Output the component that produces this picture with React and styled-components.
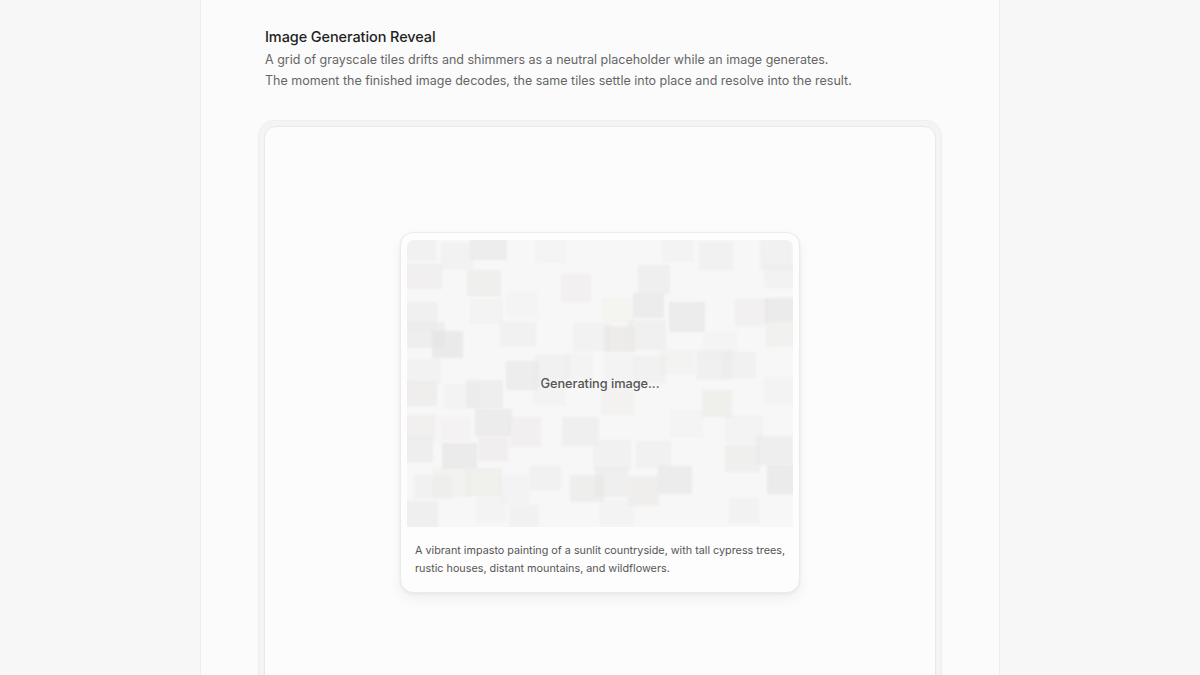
import React from "react";
import styled, { createGlobalStyle } from "styled-components";

const Global = createGlobalStyle`
  html, body { margin: 0; padding: 0; background: #f7f7f7; }
  body { font-family: Inter, "Noto Sans", sans-serif; -webkit-font-smoothing: antialiased; }
  * { box-sizing: border-box; }
`;

const Page = styled.div`
  display: flex;
  justify-content: center;
  height: 675px;
  overflow: hidden;
`;

const Column = styled.main`
  width: 800px;
  background: #fbfbfb;
  border-left: 1px solid #ececec;
  border-right: 1px solid #ececec;
  padding: 27px 57px 0;
`;

const Header = styled.header`
  padding: 0 7px;
  margin-bottom: 29px;
`;

const Title = styled.h1`
  margin: 0 0 2px;
  font-size: 14.5px;
  line-height: 20px;
  font-weight: 500;
  color: #1f1f1f;
  letter-spacing: -0.1px;
`;

const Desc = styled.p`
  margin: 0;
  font-size: 12.5px;
  line-height: 21px;
  color: #666;
`;

const Frame = styled.section`
  background: #f4f4f4;
  border: 1px solid #efefef;
  border-radius: 16px;
  padding: 5px;
`;

const Panel = styled.div`
  background: #fcfcfc;
  border: 1px solid #e9e9e9;
  border-radius: 12px;
  min-height: 620px;
  padding-top: 105px;
  display: flex;
  justify-content: center;
  align-items: flex-start;
`;

const Card = styled.figure`
  margin: 0;
  width: 400px;
  background: #fdfdfd;
  border: 1px solid #ebebeb;
  border-radius: 13px;
  padding: 7px 6px 6px;
  box-shadow: 0 6px 14px rgba(0, 0, 0, 0.05), 0 1px 3px rgba(0, 0, 0, 0.06);
`;

const ImageArea = styled.div`
  position: relative;
  width: 100%;
  height: 287px;
  background: #f7f7f7;
  border-radius: 7px 7px 2px 2px;
  overflow: hidden;
  display: flex;
  align-items: center;
  justify-content: center;
`;

const Tile = styled.div`
  position: absolute;
  border-radius: 1px;
  filter: blur(1px);
`;

const Status = styled.span`
  position: relative;
  font-size: 12.8px;
  font-weight: 500;
  color: #555;
  letter-spacing: -0.05px;
`;

const Caption = styled.figcaption`
  padding: 15px 3px 8px 8px;
  font-size: 10.8px;
  line-height: 18px;
  color: #555;
`;

function mulberry32(a) {
  return function () {
    let t = (a += 0x6d2b79f5);
    t = Math.imul(t ^ (t >>> 15), t | 1);
    t ^= t + Math.imul(t ^ (t >>> 7), t | 61);
    return ((t ^ (t >>> 14)) >>> 0) / 4294967296;
  };
}

const tiles = (() => {
  const rnd = mulberry32(20240611);
  const out = [];
  const cols = 12;
  const rows = 10;
  const cw = 386 / cols;
  const ch = 288 / rows;
  for (let r = 0; r < rows; r++) {
    for (let c = 0; c < cols; c++) {
      if (rnd() < 0.38) continue;
      const x = c * cw + (rnd() - 0.5) * 14;
      const y = r * ch + (rnd() - 0.5) * 12;
      const w = 30 + rnd() * 8;
      const h = 24 + rnd() * 6;
      const shade = 228 + Math.floor(rnd() * 12);
      const tint = rnd();
      let rr = shade, gg = shade, bb = shade;
      if (tint < 0.15) { rr += 3; bb -= 1; }
      else if (tint < 0.3) { rr += 2; gg += 2; bb -= 2; }
      const a = 0.3 + rnd() * 0.45;
      out.push({ x, y, w, h, color: `rgba(${rr},${gg},${bb},${a.toFixed(2)})` });
    }
  }
  return out;
})();

export default function App() {
  return (
    <>
      <Global />
      <Page>
        <Column>
          <Header>
            <Title>Image Generation Reveal</Title>
            <Desc>
              A grid of grayscale tiles drifts and shimmers as a neutral placeholder while an image generates.
              <br />
              The moment the finished image decodes, the same tiles settle into place and resolve into the result.
            </Desc>
          </Header>
          <Frame>
            <Panel>
              <Card>
                <ImageArea>
                  {tiles.map((t, i) => (
                    <Tile
                      key={i}
                      style={{ left: t.x, top: t.y, width: t.w, height: t.h, background: t.color }}
                    />
                  ))}
                  <Status>Generating image...</Status>
                </ImageArea>
                <Caption>
                  A vibrant impasto painting of a sunlit countryside, with tall cypress trees, rustic houses, distant
                  mountains, and wildflowers.
                </Caption>
              </Card>
            </Panel>
          </Frame>
        </Column>
      </Page>
    </>
  );
}
